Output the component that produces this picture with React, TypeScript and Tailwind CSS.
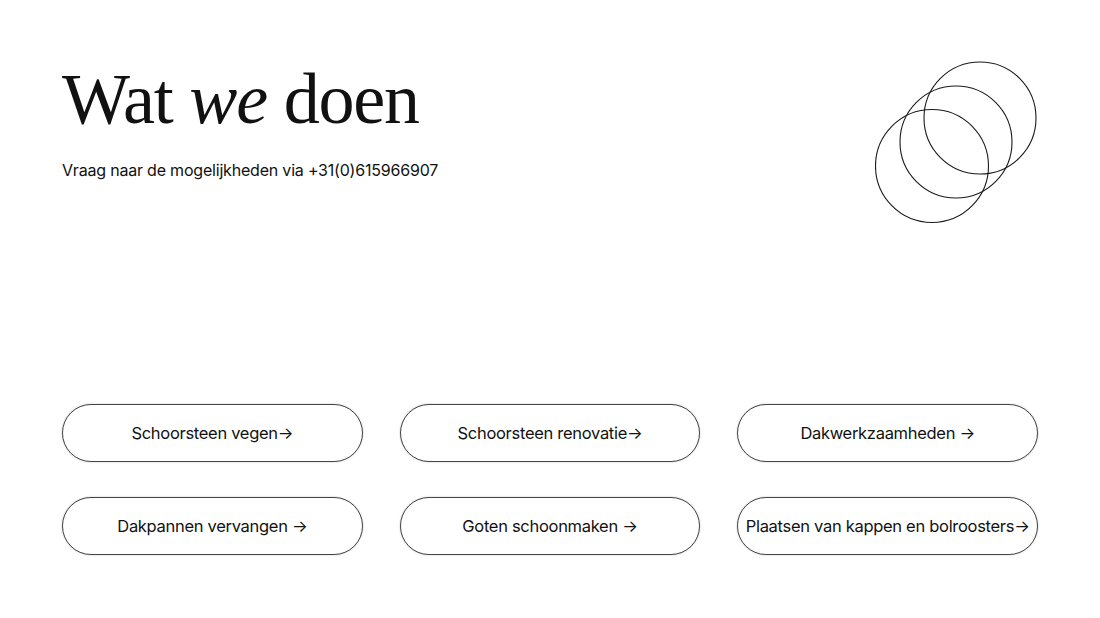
export default function App() {
  const services = [
    'Schoorsteen vegen→',
    'Schoorsteen renovatie→',
    'Dakwerkzaamheden →',
    'Dakpannen vervangen →',
    'Goten schoonmaken →',
    'Plaatsen van kappen en bolroosters→',
  ];

  return (
    <div className="min-h-[618px] w-full bg-white px-[62px] pt-[59px] text-[#111]">
      {/* Header */}
      <div className="flex items-start justify-between">
        <div>
          <h1 className="font-['Liberation_Serif',serif] text-[72px] leading-[80px] tracking-[-1.2px]">
            Wat <em className="italic">we</em> doen
          </h1>
          <p className="mt-[19px] font-['Inter',sans-serif] text-[16px] leading-6 tracking-[-0.2px]">
            Vraag naar de mogelijkheden via +31(0)615966907
          </p>
        </div>
        <svg width="164" height="164" viewBox="0 0 164 164" className="mr-[-1px] mt-[2px]" fill="none" stroke="#1a1a1a" strokeWidth="1.1">
          <circle cx="57" cy="105" r="56.5" />
          <circle cx="81" cy="81" r="56" />
          <circle cx="105" cy="57" r="56" />
        </svg>
      </div>

      {/* Services */}
      <div className="mt-[179px] grid grid-cols-3 gap-x-[37px] gap-y-[35px]">
        {services.map((s) => (
          <button
            key={s}
            className="flex h-[58px] items-center justify-center whitespace-nowrap rounded-full border border-[#444] bg-white font-['Inter',sans-serif] text-[16.5px] tracking-[-0.3px] text-[#111] shadow-[0_0_2px_rgba(0,0,0,0.25)]"
          >
            {s}
          </button>
        ))}
      </div>
    </div>
  );
}
